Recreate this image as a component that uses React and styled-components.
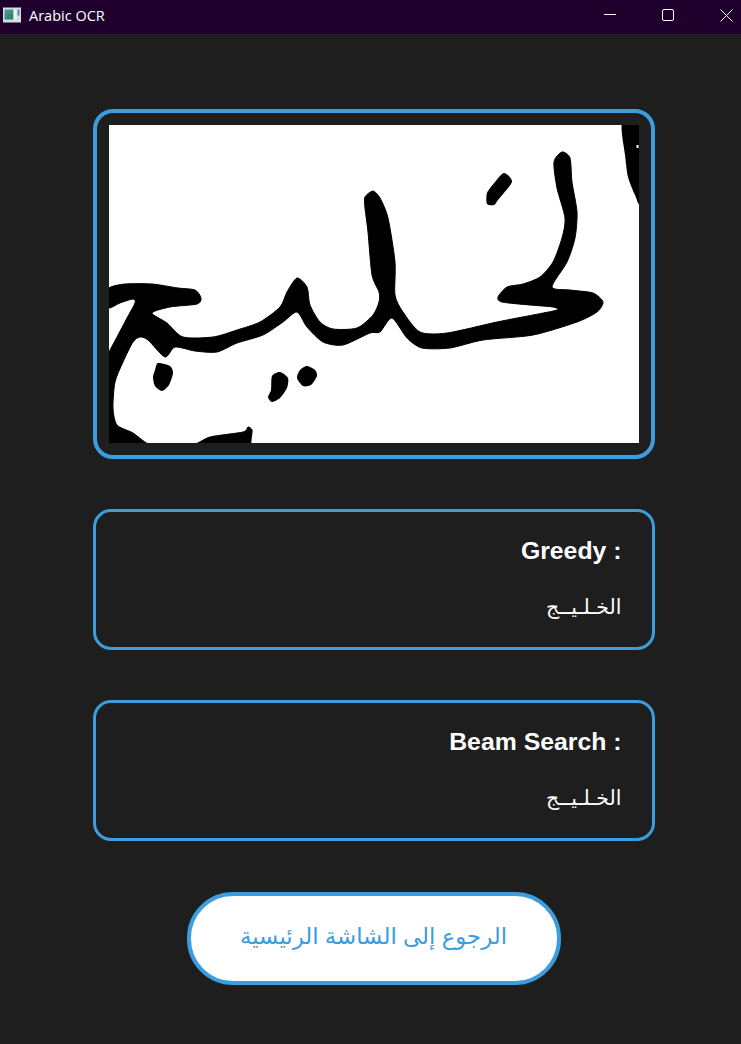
import React from "react"
import styled, { createGlobalStyle } from "styled-components"

const Global = createGlobalStyle`
html, body {
    margin: 0;
    padding: 0;
    background: #1e1e1e;
}
`

const Window = styled.div`
width: 741px;
height: 1044px;
overflow: hidden;
display: flex;
flex-direction: column;
background: #1e1e1e;
font-family: "Liberation Sans", "DejaVu Sans", sans-serif;
`

const TitleBar = styled.div`
height: 34px;
flex: none;
box-sizing: border-box;
padding-bottom: 4px;
display: flex;
align-items: center;
background: #1f002d;
color: #fff;
`

const AppIcon = styled.svg`
width: 18px;
height: 16px;
margin-left: 3px;
`

const Title = styled.div`
margin-left: 8px;
flex: 1;
font-family: "Open Sans", sans-serif;
font-size: 14.5px;
`

const WinControls = styled.div`
display: flex;
align-items: center;
gap: 46px;
padding-right: 8px;
svg {
    display: block;
}
`

const Content = styled.div`
flex: 1;
display: flex;
flex-direction: column;
align-items: center;
padding: 75px 0 0 6px;
`

const ImageCard = styled.div`
width: 562px;
height: 350px;
box-sizing: border-box;
border: 4px solid #3b9ddd;
border-radius: 20px;
padding: 12px;
`

const Handwriting = styled.svg`
display: block;
width: 530px;
height: 318px;
background: #fff;
`

const ResultCard = styled.div`
width: 562px;
height: 141px;
margin-top: 50px;
box-sizing: border-box;
border: 3px solid #3b9ddd;
border-radius: 18px;
padding: 25px 30px 0 0;
text-align: right;
color: #fff;
`

const Label = styled.div`
font-size: 24.8px;
font-weight: bold;
line-height: 28px;
`

const Word = styled.div`
margin-top: 30px;
font-size: 20.5px;
line-height: 24px;
`

const BackButton = styled.div`
width: 374px;
height: 93px;
margin-top: 51px;
box-sizing: border-box;
border: 4px solid #3b9ddd;
border-radius: 46px;
padding-bottom: 5px;
background: #fff;
color: #3b9ddd;
display: flex;
align-items: center;
justify-content: center;
font-size: 22.8px;
`

const mainStroke = [[109,288],[125,284],[152,284],[178,288],[195,290],[201,298],[197,304],[170,307],[152,313],[167,323],[183,337],[213,337],[237,330],[260,322],[280,307],[287,292],[297,278],[307,287],[310,305],[320,322],[333,329],[357,328],[373,315],[379,302],[379,292],[372,275],[368,232],[365,208],[365,197],[373,191],[380,198],[388,218],[395,262],[395,295],[403,312],[420,332],[447,333],[497,322],[533,315],[557,310],[553,307],[530,305],[502,302],[498,297],[507,287],[523,284],[540,277],[553,262],[562,238],[565,218],[557,188],[554,162],[562,152],[570,158],[572,182],[577,212],[575,238],[567,262],[552,287],[570,290],[593,293],[603,302],[597,312],[577,322],[533,335],[483,340],[450,348],[422,348],[407,338],[392,318],[380,332],[370,333],[343,345],[323,342],[307,327],[297,312],[283,322],[263,335],[237,343],[217,352],[195,351],[175,347],[165,357],[148,340],[140,337],[133,342],[123,362],[115,382],[113,408],[117,425],[133,433],[153,446],[190,446],[210,437],[243,432],[248,427],[252,430],[251,440],[250,447],[240,450],[110,450],[105,445],[105,360],[109,352],[117,337],[127,318],[135,303],[133,299],[120,303],[109,308],[105,300]]

const marks = [
    [[158,363],[170,366],[173,373],[169,385],[162,391],[155,386],[153,377],[155,370]],
    [[280,372],[288,378],[287,388],[280,398],[272,402],[268,397],[271,390],[272,376]],
    [[307,366],[315,370],[317,376],[311,385],[303,386],[297,378],[300,370]],
    [[504,173],[512,182],[498,200],[494,205],[487,204],[487,193],[495,182]],
    [[622,124],[640,124],[640,201],[635,195],[628,177],[625,155]],
]

// closed catmull-rom curve through the traced points
function smooth(pts) {
    const n = pts.length
    let d = `M${pts[0][0]} ${pts[0][1]}`
    for (let i = 0; i < n; i++) {
        const p0 = pts[(i - 1 + n) % n]
        const p1 = pts[i]
        const p2 = pts[(i + 1) % n]
        const p3 = pts[(i + 2) % n]
        const c1x = p1[0] + (p2[0] - p0[0]) / 8
        const c1y = p1[1] + (p2[1] - p0[1]) / 8
        const c2x = p2[0] - (p3[0] - p1[0]) / 8
        const c2y = p2[1] - (p3[1] - p1[1]) / 8
        d += `C${c1x} ${c1y} ${c2x} ${c2y} ${p2[0]} ${p2[1]}`
    }
    return d + "Z"
}

function ResultBox({ label, word }) {
    return (
        <ResultCard>
            <Label>{label}</Label>
            <Word dir="rtl">{word}</Word>
        </ResultCard>
    )
}

export default function App() {
    return (
        <Window>
            <Global />
            <TitleBar>
                <AppIcon viewBox="0 0 18 16">
                    <defs>
                        <linearGradient id="ico" x1="0" y1="0" x2="0.6" y2="1">
                            <stop offset="0" stopColor="#4f9f9a" />
                            <stop offset="1" stopColor="#2a7f74" />
                        </linearGradient>
                    </defs>
                    <rect x="0" y="0.5" width="18" height="15" fill="#d8dedf" />
                    <rect x="1.5" y="2.5" width="9" height="10" fill="url(#ico)" />
                    <rect x="10.5" y="2.5" width="3" height="10" fill="#eef2f1" />
                    <rect x="14.5" y="2.5" width="2" height="6" fill="#4f86a8" />
                </AppIcon>
                <Title>Arabic OCR</Title>
                <WinControls>
                    <svg width="12" height="12" viewBox="0 0 12 12">
                        <path d="M0 5.5H12" stroke="#fff" strokeWidth="1" />
                    </svg>
                    <svg width="12" height="12" viewBox="0 0 12 12">
                        <rect x="0.5" y="0.5" width="11" height="11" rx="1.5" fill="none" stroke="#fff" />
                    </svg>
                    <svg width="13" height="13" viewBox="0 0 13 13">
                        <path d="M0.5 0.5L12.5 12.5M12.5 0.5L0.5 12.5" stroke="#fff" strokeWidth="1" />
                    </svg>
                </WinControls>
            </TitleBar>
            <Content>
                <ImageCard>
                    <Handwriting viewBox="109 125 530 318">
                        <path d={smooth(mainStroke)} fill="#000" stroke="#000" strokeWidth="1" />
                        {marks.map((m, i) => <path key={i} d={smooth(m)} fill="#000" />)}
                        <rect x="636.5" y="145" width="2" height="3" fill="#fff" />
                    </Handwriting>
                </ImageCard>
                <ResultBox label="Greedy :" word="الخـلـيــج" />
                <ResultBox label="Beam Search :" word="الخـلـيــج" />
                <BackButton dir="rtl">الرجوع إلى الشاشة الرئيسية</BackButton>
            </Content>
        </Window>
    )
}
